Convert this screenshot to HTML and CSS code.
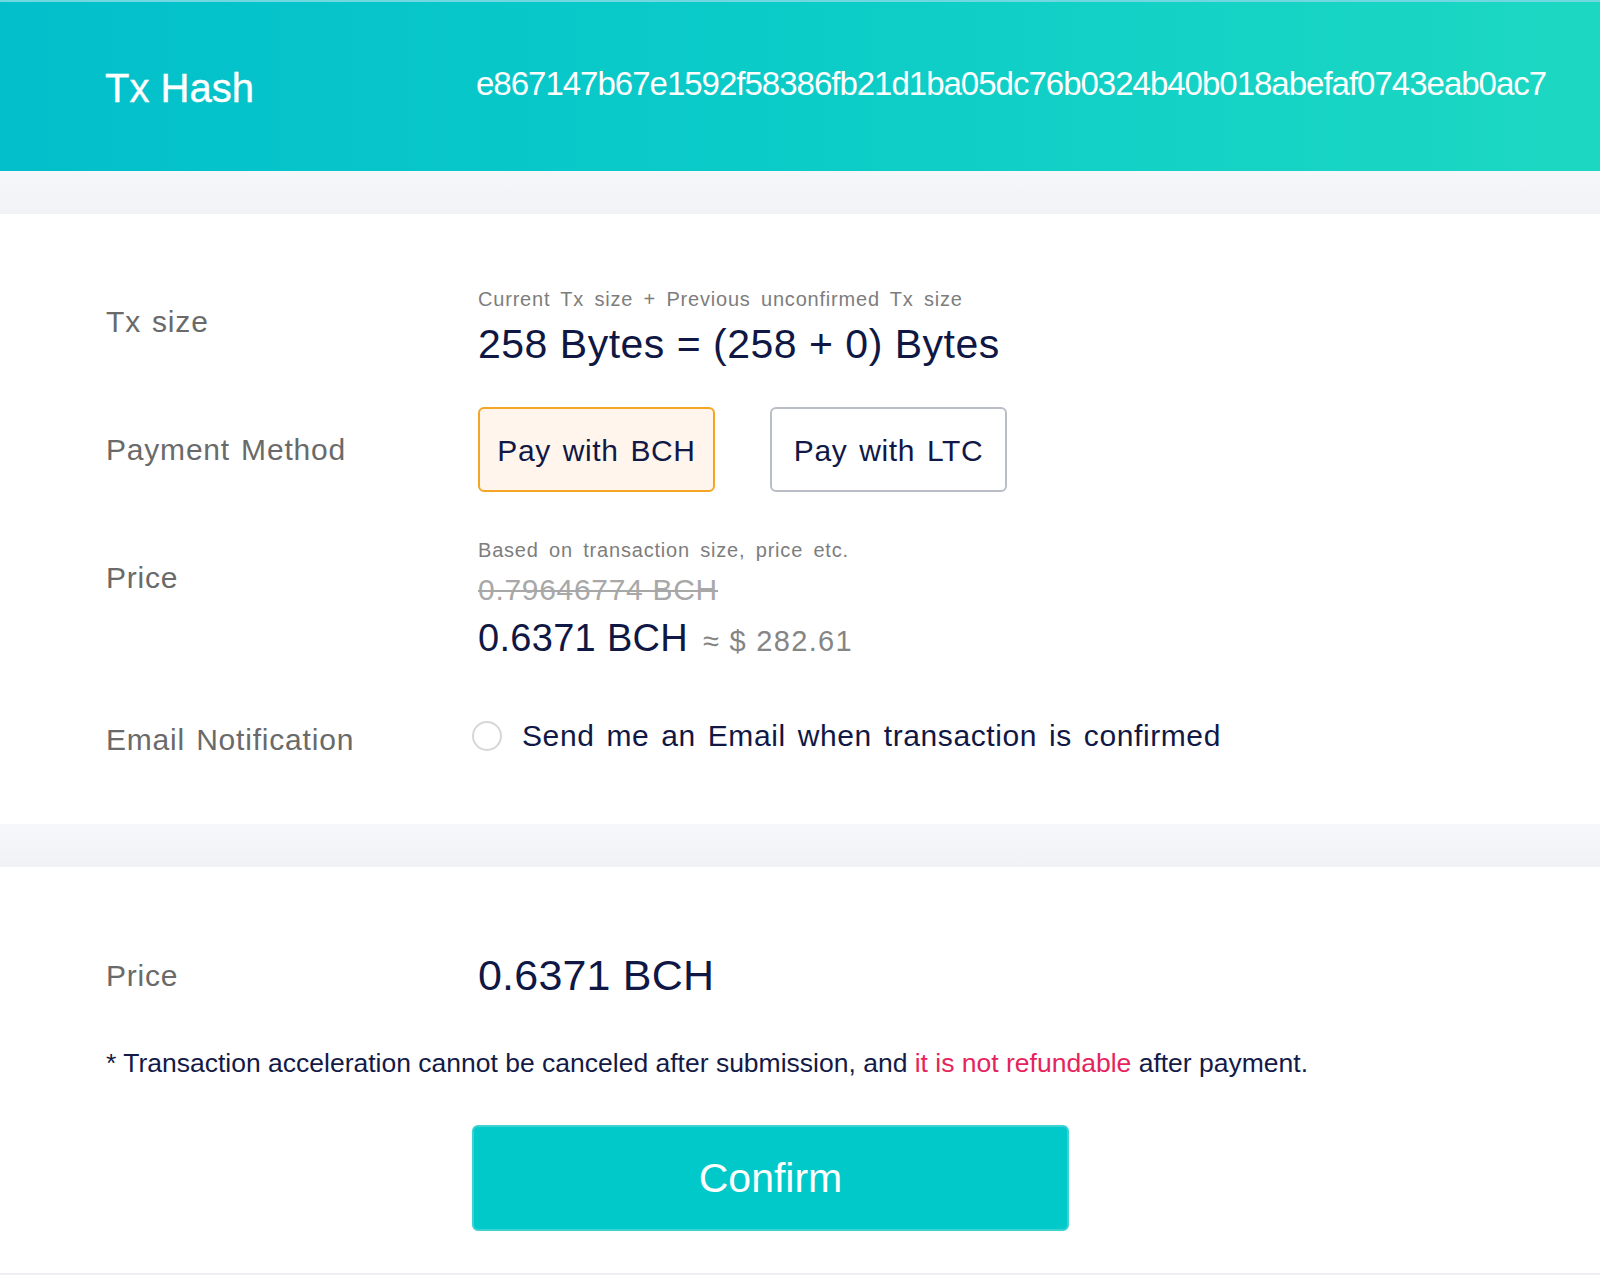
FILE: index.html
```html
<!DOCTYPE html>
<html lang="en">
<head>
<meta charset="utf-8">
<title>Accelerate Transaction</title>
<link rel="stylesheet" href="styles.css">
</head>
<body>
<header class="hash-bar">
  <div class="hash-title">Tx Hash</div>
  <div class="hash-value">e867147b67e1592f58386fb21d1ba05dc76b0324b40b018abefaf0743eab0ac7</div>
</header>
<div class="band"></div>
<section class="panel panel-top">
  <div class="row row-size">
    <div class="label">Tx size</div>
    <div class="content">
      <div class="hint">Current Tx size + Previous unconfirmed Tx size</div>
      <div class="size-value">258 Bytes = (258 + 0) Bytes</div>
    </div>
  </div>
  <div class="row row-method">
    <div class="label">Payment Method</div>
    <div class="content methods">
      <button class="method method-active">Pay with BCH</button>
      <button class="method">Pay with LTC</button>
    </div>
  </div>
  <div class="row row-price">
    <div class="label label-price">Price</div>
    <div class="content">
      <div class="hint">Based on transaction size, price etc.</div>
      <div class="old-price">0.79646774 BCH</div>
      <div class="price-line"><span class="price-value">0.6371 BCH</span><span class="price-usd">≈ $ 282.61</span></div>
    </div>
  </div>
  <div class="row row-email">
    <div class="label">Email Notification</div>
    <label class="content email">
      <span class="radio"></span>
      <span class="email-text">Send me an Email when transaction is confirmed</span>
    </label>
  </div>
</section>
<div class="band"></div>
<section class="panel panel-bottom">
  <div class="row row-total">
    <div class="label">Price</div>
    <div class="content total-value">0.6371 BCH</div>
  </div>
  <p class="notice">* Transaction acceleration cannot be canceled after submission, and <span class="warn">it is not refundable</span> after payment.</p>
  <div class="confirm-wrap">
    <button class="confirm">Confirm</button>
  </div>
</section>
</body>
</html>
```
FILE: styles.css
```css
* { box-sizing: border-box; }

html, body {
  margin: 0;
  padding: 0;
  background: #ffffff;
}

body {
  width: 1600px;
  height: 1277px;
  overflow: hidden;
  font-family: "Liberation Sans", Arial, sans-serif;
  color: #111845;
}

.hash-bar {
  height: 171px;
  display: flex;
  align-items: center;
  padding-left: 105px;
  background: linear-gradient(90deg, #02bfcb 0%, #0cccc8 50%, #1cd8c2 100%);
  border-top: 2px solid #6fd8e0;
  color: #ffffff;
}

.hash-title {
  width: 371px;
  font-size: 40px;
  padding-top: 4px;
  -webkit-text-stroke: 0.4px #ffffff;
}

.hash-value {
  font-size: 33px;
  letter-spacing: -1px;
  padding-bottom: 6px;
}

.band {
  height: 43px;
  background: linear-gradient(180deg, #f6f7fa 0%, #f1f2f5 100%);
}

.panel {
  padding-left: 106px;
}

.panel-top {
  padding-top: 72px;
  padding-bottom: 64px;
}

.row {
  display: grid;
  grid-template-columns: 372px 1fr;
  align-items: center;
}

.label {
  font-size: 30px;
  letter-spacing: 0.8px;
  word-spacing: 2px;
  color: #6a6a6a;
  line-height: 40px;
}

.hint {
  font-size: 20px;
  line-height: 26px;
  letter-spacing: 0.8px;
  word-spacing: 4px;
  color: #7d7d7d;
}

.size-value {
  font-size: 41px;
  line-height: 44px;
  margin-top: 10px;
  letter-spacing: 0.5px;
  color: #0f1744;
}

.row-size .label {
  align-self: start;
  margin-top: 16px;
}

.row-method {
  margin-top: 41px;
}

.methods {
  display: flex;
  gap: 55px;
}

.method {
  width: 237px;
  height: 85px;
  border: 2px solid #b9bdc6;
  border-radius: 6px;
  background: #ffffff;
  font-family: "Liberation Sans", Arial, sans-serif;
  font-size: 30px;
  letter-spacing: 0.6px;
  word-spacing: 3px;
  color: #111845;
  padding: 0;
  padding-top: 2px;
}

.method-active {
  border-color: #f5a524;
  background: #fff5ec;
}

.row-price {
  margin-top: 45px;
  align-items: start;
}

.label-price {
  margin-top: 21px;
}

.old-price {
  font-size: 30px;
  line-height: 40px;
  letter-spacing: 0.7px;
  color: #a8a8a8;
  text-decoration: line-through;
  text-decoration-thickness: 2px;
  margin-top: 7px;
}

.price-line {
  display: flex;
  align-items: baseline;
  line-height: 48px;
  margin-top: 4px;
}

.price-value {
  font-size: 38px;
  letter-spacing: 0.3px;
  color: #0f1744;
}

.price-usd {
  margin-left: 15px;
  font-size: 29px;
  letter-spacing: 1.3px;
  color: #858585;
}

.row-email {
  margin-top: 47px;
}

.row-email .label {
  margin-top: 8px;
}

.email {
  display: flex;
  align-items: center;
  margin-left: -6px;
}

.radio {
  width: 30px;
  height: 30px;
  border: 2px solid #d6d6d6;
  border-radius: 50%;
  flex: none;
}

.email-text {
  margin-left: 20px;
  font-size: 30px;
  line-height: 40px;
  letter-spacing: 0.6px;
  word-spacing: 3px;
  color: #111845;
}

.panel-bottom {
  padding-top: 82px;
  padding-bottom: 42px;
  border-bottom: 2px solid #eeeff2;
}

.total-value {
  font-size: 43px;
  line-height: 52px;
  letter-spacing: 0.2px;
  color: #0f1744;
}

.row-total .label {
  margin-top: 2px;
}

.notice {
  margin: 45px 0 0 0;
  font-size: 26.5px;
  line-height: 34px;
  color: #141a47;
}

.warn {
  color: #e5245d;
}

.confirm-wrap {
  margin-top: 45px;
  padding-left: 366px;
}

.confirm {
  width: 597px;
  height: 106px;
  border: 2px solid #3ad2d2;
  border-radius: 6px;
  background: #02c9c9;
  color: #ffffff;
  font-family: "Liberation Sans", Arial, sans-serif;
  font-size: 41px;
  padding: 0;
}
```
